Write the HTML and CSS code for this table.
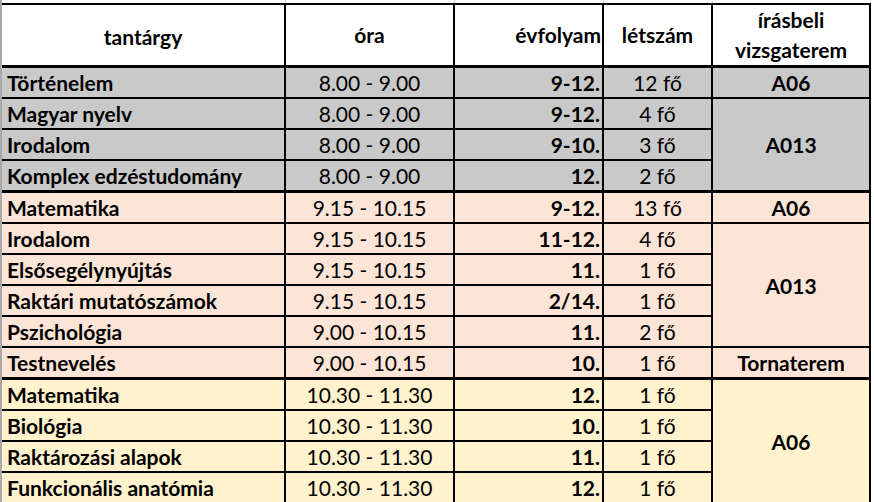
FILE: index.html
```html
<!DOCTYPE html>
<html lang="hu">
<head>
<meta charset="utf-8">
<title>Vizsgabeosztás</title>
<link rel="stylesheet" href="styles.css">
</head>
<body>
<div class="sheet">
  <div class="gridstrip">
    <span class="g1"></span><span class="g2"></span><span class="g3"></span><span class="g4"></span><span class="g5"></span>
  </div>
  <table class="exam">
    <colgroup>
      <col class="c1"><col class="c2"><col class="c3"><col class="c4"><col class="c5">
    </colgroup>
    <thead>
      <tr class="head">
        <th class="subj-h">tantárgy</th>
        <th>óra</th>
        <th class="grade-h">évfolyam</th>
        <th>létszám</th>
        <th>írásbeli<br>vizsgaterem</th>
      </tr>
    </thead>
    <tbody class="grp grey">
      <tr><td class="subj">Történelem</td><td class="time">8.00 - 9.00</td><td class="grade">9-12.</td><td class="cnt">12 fő</td><td class="room">A06</td></tr>
      <tr><td class="subj">Magyar nyelv</td><td class="time">8.00 - 9.00</td><td class="grade">9-12.</td><td class="cnt">4 fő</td><td class="room last" rowspan="3">A013</td></tr>
      <tr><td class="subj">Irodalom</td><td class="time">8.00 - 9.00</td><td class="grade">9-10.</td><td class="cnt">3 fő</td></tr>
      <tr class="end"><td class="subj">Komplex edzéstudomány</td><td class="time">8.00 - 9.00</td><td class="grade">12.</td><td class="cnt">2 fő</td></tr>
    </tbody>
    <tbody class="grp peach">
      <tr><td class="subj">Matematika</td><td class="time">9.15 - 10.15</td><td class="grade">9-12.</td><td class="cnt">13 fő</td><td class="room">A06</td></tr>
      <tr><td class="subj">Irodalom</td><td class="time">9.15 - 10.15</td><td class="grade">11-12.</td><td class="cnt">4 fő</td><td class="room" rowspan="4">A013</td></tr>
      <tr><td class="subj">Elsősegélynyújtás</td><td class="time">9.15 - 10.15</td><td class="grade">11.</td><td class="cnt">1 fő</td></tr>
      <tr><td class="subj">Raktári mutatószámok</td><td class="time">9.15 - 10.15</td><td class="grade">2/14.</td><td class="cnt">1 fő</td></tr>
      <tr><td class="subj">Pszichológia</td><td class="time">9.00 - 10.15</td><td class="grade">11.</td><td class="cnt">2 fő</td></tr>
      <tr class="end"><td class="subj">Testnevelés</td><td class="time">9.00 - 10.15</td><td class="grade">10.</td><td class="cnt">1 fő</td><td class="room last">Tornaterem</td></tr>
    </tbody>
    <tbody class="grp cream">
      <tr><td class="subj">Matematika</td><td class="time">10.30 - 11.30</td><td class="grade">12.</td><td class="cnt">1 fő</td><td class="room" rowspan="4">A06</td></tr>
      <tr><td class="subj">Biológia</td><td class="time">10.30 - 11.30</td><td class="grade">10.</td><td class="cnt">1 fő</td></tr>
      <tr><td class="subj">Raktározási alapok</td><td class="time">10.30 - 11.30</td><td class="grade">11.</td><td class="cnt">1 fő</td></tr>
      <tr><td class="subj">Funkcionális anatómia</td><td class="time">10.30 - 11.30</td><td class="grade">12.</td><td class="cnt">1 fő</td></tr>
    </tbody>
  </table>
</div>
</body>
</html>
```

FILE: styles.css
```css
html, body {
  margin: 0;
  padding: 0;
  background: #ffffff;
}

body {
  font-family: Lato, "Open Sans", "Liberation Sans", sans-serif;
  color: #000000;
  width: 874px;
  height: 502px;
  overflow: hidden;
}

.sheet {
  border-left: 2px solid #a9a9a9;
  width: 872px;
}

.gridstrip {
  display: flex;
  height: 3px;
}

.gridstrip span {
  display: block;
  height: 3px;
  box-sizing: border-box;
  border-right: 1px solid #d9d9d9;
}

.gridstrip .g1 { width: 284px; }
.gridstrip .g2 { width: 169px; }
.gridstrip .g3 { width: 149px; }
.gridstrip .g4 { width: 109px; }
.gridstrip .g5 { width: 158px; }

.exam {
  table-layout: fixed;
  border-collapse: separate;
  border-spacing: 0;
  width: 869px;
  border-top: 2px solid #000;
  font-size: 21px;
  line-height: 29px;
}

.c1 { width: 284px; }
.c2 { width: 169px; }
.c3 { width: 149px; }
.c4 { width: 109px; }
.c5 { width: 158px; }

.exam th,
.exam td {
  border-right: 2px solid #000;
  border-bottom: 2px solid #000;
  padding: 0;
  white-space: nowrap;
  overflow: visible;
  vertical-align: middle;
}

.exam tr {
  height: 31px;
}

.exam tr.head {
  height: 62px;
}

.exam th {
  font-weight: 700;
  text-align: center;
  background: #ffffff;
  border-bottom-width: 3px;
  line-height: 30px;
}

.exam th.subj-h {
  padding-top: 4px;
}

.exam th.grade-h {
  text-align: right;
  padding-right: 1px;
}

.exam tr.end {
  height: 32px;
}

.exam tr.end td,
.exam td.last {
  border-bottom-width: 3px;
}

.subj {
  font-weight: 700;
  text-align: left;
  padding-left: 5px !important;
}

.time {
  text-align: center;
}

.grade {
  font-weight: 700;
  text-align: right;
  padding-right: 2px !important;
}

.cnt {
  text-align: center;
}

.room {
  font-weight: 700;
  text-align: center;
}

.grey td { background: #c9c9c9; }
.peach td { background: #fce4d6; }
.cream td { background: #fff2cc; }
```
